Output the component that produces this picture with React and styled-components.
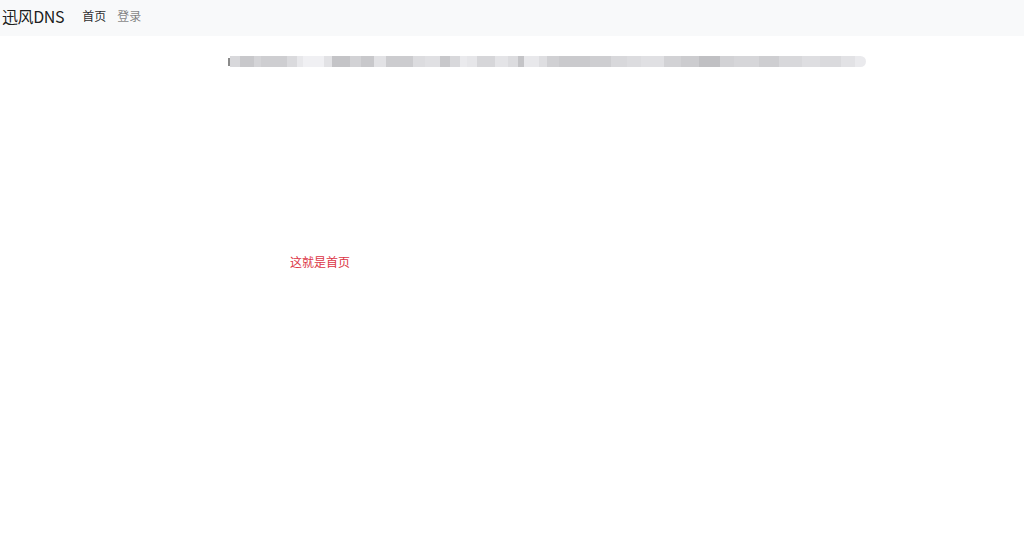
import React from 'react'
import styled, { createGlobalStyle } from 'styled-components'

const GlobalStyle = createGlobalStyle`
  html, body {
    margin: 0;
    padding: 0;
    background: #fff;
  }
  body {
    font-family: "Noto Sans CJK SC", "Liberation Sans", sans-serif;
    color: #212529;
  }
`

const Navbar = styled.nav`
  display: flex;
  align-items: center;
  height: 36px;
  padding: 0 2px 5px;
  background: #f8f9fa;
  box-sizing: border-box;
`

const Brand = styled.a`
  font-size: 16px;
  letter-spacing: -0.4px;
  color: rgba(0, 0, 0, 0.9);
  text-decoration: none;
  margin-right: 18px;
  line-height: 1;
`

const NavLinks = styled.div`
  display: flex;
  gap: 11px;
`

const NavLink = styled.a`
  font-size: 12px;
  line-height: 1;
  text-decoration: none;
  color: ${({ $active }) => ($active ? 'rgba(0, 0, 0, 0.85)' : 'rgba(0, 0, 0, 0.5)')};
`

const Main = styled.main`
  display: flex;
  flex-direction: column;
  padding-top: 20px;
`

const Notice = styled.div`
  display: flex;
  align-items: center;
  margin-left: 228px;
  height: 11px;
`

const Lead = styled.span`
  width: 2px;
  height: 8px;
  background: #8a8a8a;
  filter: blur(0.3px);
`

const Mosaic = styled.div`
  display: flex;
  width: 636px;
  height: 11px;
  border-radius: 0 6px 6px 0;
  overflow: hidden;
  filter: blur(0.6px);
`

const Cell = styled.span`
  flex: none;
  height: 100%;
`

const Message = styled.p`
  margin: 189px 0 0 290px;
  font-size: 12px;
  color: #dc3545;
  line-height: 1;
`

const cells = [
  [10, 216], [13, 200], [7, 212], [25, 206], [10, 218], [6, 232], [20, 240],
  [8, 226], [18, 196], [10, 210], [13, 200], [12, 226], [26, 204], [12, 220],
  [14, 224], [10, 200], [10, 216], [6, 234], [10, 230], [18, 214], [12, 228],
  [10, 220], [6, 196], [14, 232], [8, 222], [12, 208], [30, 202], [20, 206],
  [16, 216], [14, 220], [22, 224], [16, 210], [18, 204], [20, 192], [14, 210],
  [24, 214], [20, 206], [22, 216], [18, 222], [20, 218], [14, 226], [10, 234]
]

const total = cells.reduce((sum, [w]) => sum + w, 0)

export default function App() {
  return (
    <>
      <GlobalStyle />
      <Navbar>
        <Brand href="#">迅风DNS</Brand>
        <NavLinks>
          <NavLink href="#" $active>首页</NavLink>
          <NavLink href="#">登录</NavLink>
        </NavLinks>
      </Navbar>
      <Main>
        <Notice>
          <Lead />
          <Mosaic>
            {cells.map(([w, g], i) => (
              <Cell
                key={i}
                style={{
                  width: `${(w / total) * 100}%`,
                  background: `rgb(${g}, ${g}, ${g + 3})`,
                }}
              />
            ))}
          </Mosaic>
        </Notice>
        <Message>这就是首页</Message>
      </Main>
    </>
  )
}
